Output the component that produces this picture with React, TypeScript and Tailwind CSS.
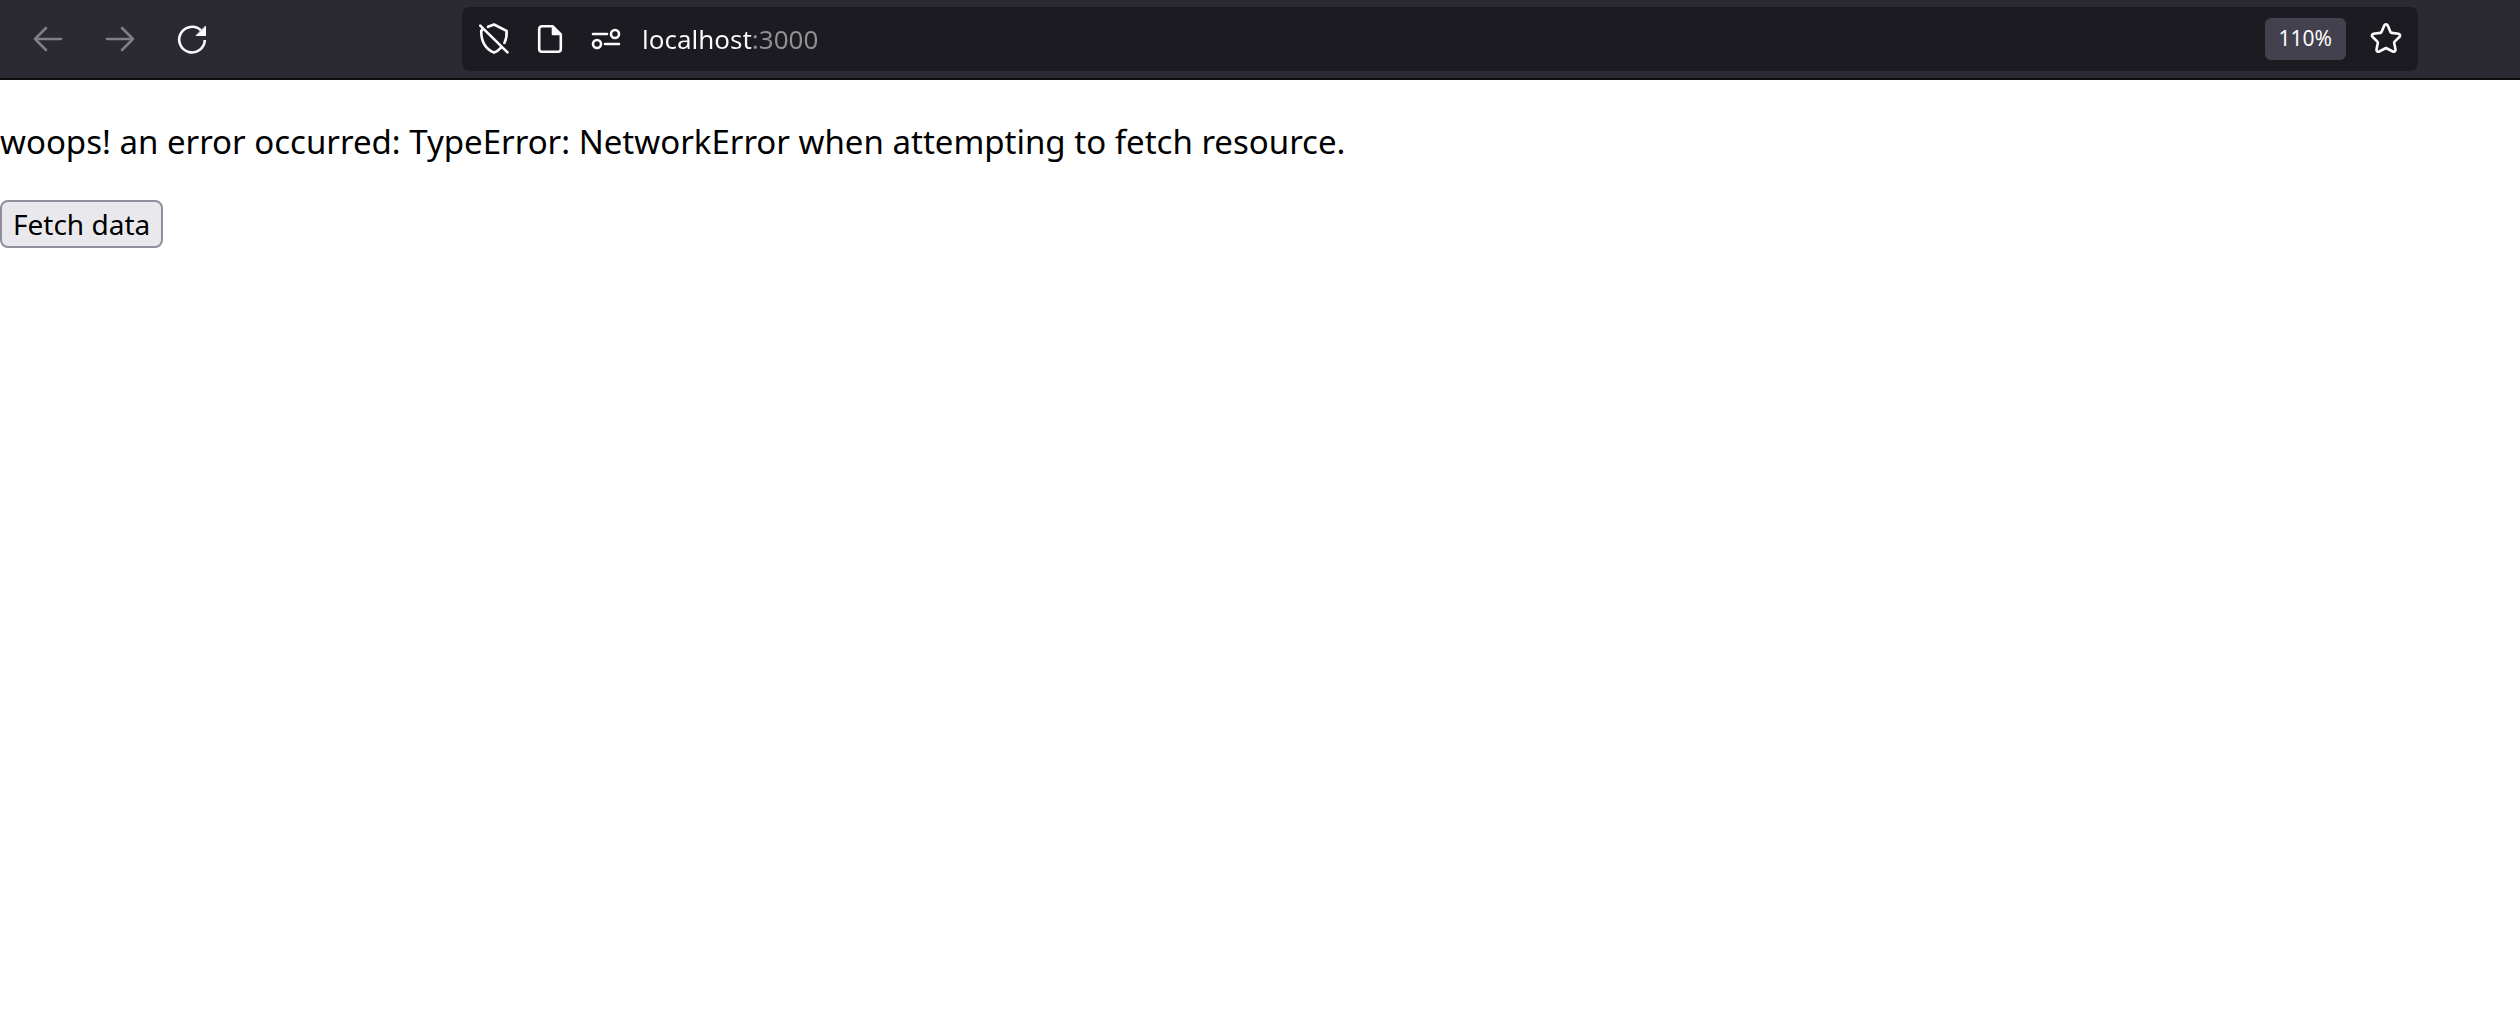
import React, { useState } from "react";

type IconProps = { children: React.ReactNode };

function Icon({ children }: IconProps) {
  return (
    <svg
      viewBox="0 0 32 32"
      className="size-8 shrink-0"
      fill="none"
      stroke="currentColor"
      strokeWidth="2.6"
      strokeLinecap="round"
      strokeLinejoin="round"
      aria-hidden="true"
    >
      {children}
    </svg>
  );
}

type IconButtonProps = IconProps & { label: string; disabled?: boolean };

function IconButton({ label, disabled, children }: IconButtonProps) {
  return (
    <button type="button" aria-label={label} disabled={disabled} className="text-[#fbfbfe] disabled:text-[#7f7e84]">
      <Icon>{children}</Icon>
    </button>
  );
}

function AddressBar() {
  const [url, setUrl] = useState("localhost:3000");
  return (
    <div className="flex h-16 grow items-center rounded-lg bg-[#1c1b22] pr-4 pl-4">
      <div className="flex items-center gap-6">
        <IconButton label="Tracking protection is off">
          <path d="M10 3.800 16 1.500 28.600 7.800c.4 5-.5 8.700-2.200 12.200" />
          <path d="M3.200 8c0 10 3 17.500 12.800 21.600 3-1.200 5-2.800 6.800-4.800" />
          <path d="M2.200 2.600 29.500 29.400M3.200 8 5 5.500" />
        </IconButton>
        <IconButton label="Site information">
          <path d="M18.500 3.200H8a2.800 2.800 0 0 0-2.800 2.800v20A2.800 2.800 0 0 0 8 28.800h16a2.800 2.800 0 0 0 2.800-2.800V11.500z" />
          <path d="M18.500 3.200v8.300h8.300z" fill="currentColor" strokeWidth="1.600" />
        </IconButton>
        <IconButton label="Permissions">
          <circle cx="25" cy="11" r="4" />
          <circle cx="7" cy="21" r="4" />
          <path d="M3 11h14M15 21h14" />
        </IconButton>
      </div>
      <input
        type="text"
        aria-label="Address"
        value={url}
        onChange={(e) => setUrl(e.target.value)}
        className="ml-5 h-12 min-w-0 grow bg-[linear-gradient(to_right,#fbfbfe_111px,#8f8f94_111px)] bg-clip-text text-[26px] text-[#fbfbfe] outline-none [-webkit-text-fill-color:transparent]"
      />
      <button type="button" className="mr-6 h-[42px] rounded-md bg-[#42414d] px-[14px] text-[21px] text-[#fbfbfe]">
        110%
      </button>
      <IconButton label="Bookmark this page">
        <path d="M14.300 2.400a1.900 1.900 0 0 1 3.400 0l2.800 6.600a1.500 1.500 0 0 0 1.200.9l6.900.9a1.800 1.800 0 0 1 1 3l-5 4.800a1.500 1.500 0 0 0-.4 1.400l1.300 6.600a1.800 1.800 0 0 1-2.700 1.900L16 25l-6.800 3.500a1.800 1.800 0 0 1-2.700-1.900l1.300-6.600a1.500 1.500 0 0 0-.4-1.400l-5-4.800a1.800 1.800 0 0 1 1-3l6.900-.9a1.500 1.500 0 0 0 1.200-.9z" />
      </IconButton>
    </div>
  );
}

export default function App() {
  return (
    <div className="min-h-screen bg-white font-['Noto_Sans',sans-serif] text-black">
      <header className="flex h-20 items-center border-b-2 border-[#0c0c0d] bg-[#2b2a33] pr-[102px] pl-8">
        <nav aria-label="History" className="mr-[254px] flex gap-10">
          <IconButton label="Back" disabled>
            <path d="M29 16H3M14 5 3 16l11 11" />
          </IconButton>
          <IconButton label="Forward" disabled>
            <path d="M3 16h26M18 5l11 11-11 11" />
          </IconButton>
          <IconButton label="Reload">
            <path d="M28.800 17A12.800 12.800 0 1 1 25 7.500" strokeLinecap="butt" />
            <path d="M29.500 3.500v9h-9z" fill="currentColor" strokeWidth="1" />
          </IconButton>
        </nav>
        <AddressBar />
      </header>
      <main>
        <p className="pt-[38px] pb-[34px] text-[33px] leading-[48px]">
          woops! an error occurred: TypeError: NetworkError when attempting to fetch resource.
        </p>
        <button
          type="button"
          className="flex h-12 items-center rounded-lg border-2 border-[#8f8f9d] bg-[#e9e9ed] px-[11px] text-[28px] leading-none"
        >
          Fetch data
        </button>
      </main>
    </div>
  );
}
